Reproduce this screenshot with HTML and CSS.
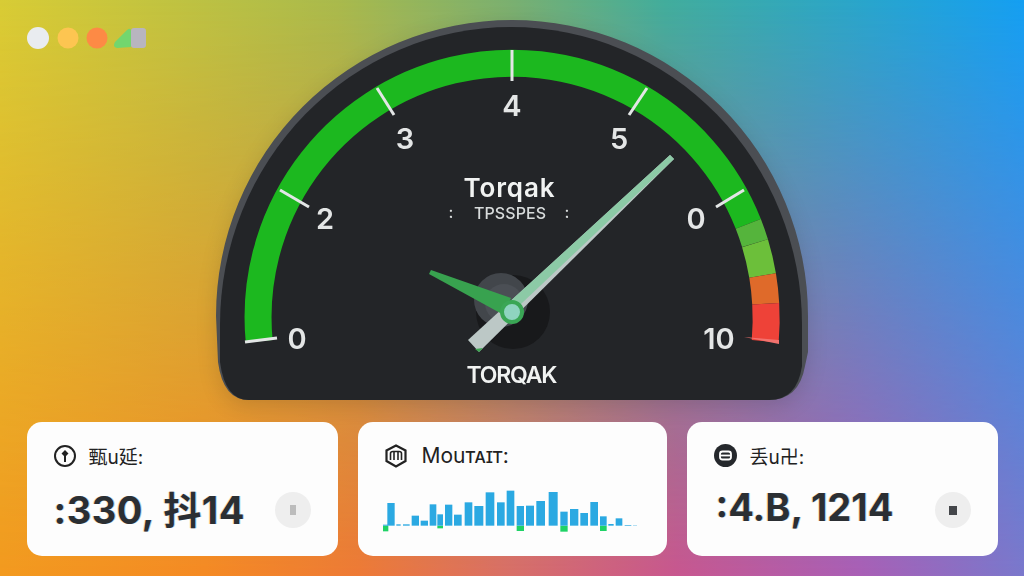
FILE: index.html
```html
<!DOCTYPE html>
<html lang="en">
<head>
    <meta charset="UTF-8">
    <meta name="viewport" content="width=device-width, initial-scale=1.0">
    <title>Torqak</title>
    <link rel="stylesheet" href="styles.css">
</head>
<body>
    <div class="screen">
        <!-- Window controls -->
        <svg class="controls" width="126" height="24" viewBox="26 26 126 24">
            <circle cx="38" cy="38" r="11" fill="#e9ecf0"/>
            <circle cx="68" cy="38" r="10.5" fill="#fdc551"/>
            <circle cx="97" cy="38" r="10.5" fill="#fd8a45"/>
            <path d="M115 42 L127 30 Q131 27 131 31 L131 47 L117 48 Q112 47 115 42 Z" fill="#72d66e"/>
            <rect x="131" y="28" width="15" height="20" rx="3" fill="#b8b5bf"/>
        </svg>

        <!-- Gauge -->
        <svg class="gauge" width="600" height="392" viewBox="213 14 600 392">
            <path class="rim" d="M217 316 A296 296 0 0 1 809 316 L809 352 L806 366 Q800 400 770 400 L250 400 Q224 400 219 362 Z"/>
            <path class="face" d="M221 325 A291 298 0 0 1 803 325 L803 366 Q798 400 770 400 L250 400 Q226 400 221 362 Z"/>

            <path class="band" stroke="#1cb81f" d="M260.2 341.3 A254 254 0 0 1 749.3 223.9"/>
            <path class="band" stroke="#55b43c" d="M749.3 223.9 A254 254 0 0 1 756 243.2"/>
            <path class="band" stroke="#6cbf3a" d="M756 243.2 A254 254 0 0 1 763.6 275.5"/>
            <path class="band" stroke="#df6a2a" d="M763.6 275.5 A254 254 0 0 1 766.7 303.7"/>
            <path class="band" stroke="#ee4238" d="M766.7 303.7 A254 254 0 0 1 766.2 341.3"/>
            <path d="M745 337 L780 340 L780 344 Z" fill="#f2726e"/>

            <g class="ticks">
                <line x1="246" y1="342" x2="278" y2="338"/>
                <line x1="281" y1="190" x2="310" y2="207"/>
                <line x1="378" y1="88" x2="395" y2="115"/>
                <line x1="513" y1="50" x2="513" y2="81"/>
                <line x1="648" y1="88" x2="630" y2="115"/>
                <line x1="745" y1="190" x2="717" y2="207"/>
            </g>

            <g class="num">
                <text x="298" y="349">0</text>
                <text x="326" y="229">2</text>
                <text x="406" y="149">3</text>
                <text x="513" y="116">4</text>
                <text x="620" y="149">5</text>
                <text x="697" y="229">0</text>
                <text x="720" y="349">10</text>
            </g>

            <text class="title title-top" x="510" y="197" textLength="91">Torqak</text>
            <text class="sub" x="511" y="219" textLength="72">TPSSPES</text>
            <text class="sub" x="452" y="218">:</text>
            <text class="sub" x="568" y="218">:</text>
            <text class="title" x="513" y="383" textLength="91">TORQAK</text>

            <!-- hub -->
            <circle cx="514" cy="312" r="37" fill="#18191b"/>
            <circle cx="502" cy="300" r="27" fill="#42464b"/>
            <circle cx="505" cy="303" r="19" fill="#4b4f55"/>

            <!-- needles -->
            <path d="M469 340 L671 155 L675 159 L480 352 Z" fill="#bcc8c6"/>
            <path d="M506 306 L671 155 L675 159 L522 304 Z" fill="#8ccaa6"/>
            <path d="M476 349 L480 352 L484 348 Z" fill="#3fa653"/>
            <path d="M430 274 L432 270 L512 298 L503 314 Z" fill="#38a24f"/>
            <circle cx="513" cy="312" r="10" fill="#8fd4c0" stroke="#3aa655" stroke-width="4"/>
        </svg>

        <!-- Stat cards -->
        <div class="cards">
            <div class="card">
                <div class="card-head">
                    <svg class="icon" width="22" height="22" viewBox="0 0 22 22">
                        <circle cx="11" cy="11" r="10" fill="none" stroke="#222" stroke-width="2"/>
                        <path d="M11 5 L14.5 8.5 L12 11 L12 17 L10 17 L10 11 L7.5 8.5 Z" fill="#222"/>
                    </svg>
                    <span class="label">甄u延:</span>
                </div>
                <div class="card-body">
                    <span class="value">:330, 抖14</span>
                    <span class="round"><i class="dot-light"></i></span>
                </div>
            </div>

            <div class="card">
                <div class="card-head">
                    <svg class="icon" width="22" height="24" viewBox="0 0 22 24">
                        <path d="M11 1.5 L20.5 6.5 L20.5 17 L11 22.5 L1.5 17 L1.5 6.5 Z" fill="none" stroke="#222" stroke-width="2.2"/>
                        <path d="M5.5 16 L5.5 9.5 Q5.5 7.5 8 7.5 L14 7.5 Q16.5 7.5 16.5 9.5 L16.5 16 M9 16 L9 8 M13 16 L13 8" fill="none" stroke="#222" stroke-width="1.6"/>
                    </svg>
                    <span class="label label-caps">Moutait:</span>
                </div>
                <svg class="chart" width="255" height="44" viewBox="100 222 765 132">
                    <g fill="#1fd266">
                        <rect x="100" y="332" width="16" height="17"/>
                        <rect x="263" y="332" width="17" height="8"/>
                        <rect x="501" y="332" width="22" height="16"/>
                        <rect x="632" y="332" width="22" height="18"/>
                        <rect x="751" y="332" width="20" height="16"/>
                    </g>
                    <g fill="#2ba9e2">
                        <rect x="100" y="329" width="15" height="3"/>
                        <rect x="113" y="264" width="22" height="68"/>
                        <rect x="140" y="328" width="13" height="4"/>
                        <rect x="160" y="328" width="20" height="4"/>
                        <rect x="186" y="302" width="22" height="30"/>
                        <rect x="213" y="317" width="22" height="15"/>
                        <rect x="240" y="268" width="20" height="64"/>
                        <rect x="263" y="298" width="17" height="34"/>
                        <rect x="286" y="269" width="22" height="63"/>
                        <rect x="313" y="299" width="23" height="33"/>
                        <rect x="345" y="262" width="23" height="70"/>
                        <rect x="374" y="273" width="27" height="59"/>
                        <rect x="408" y="232" width="26" height="100"/>
                        <rect x="442" y="262" width="23" height="70"/>
                        <rect x="471" y="227" width="23" height="105"/>
                        <rect x="501" y="273" width="22" height="59"/>
                        <rect x="529" y="272" width="24" height="60"/>
                        <rect x="560" y="258" width="26" height="74"/>
                        <rect x="597" y="231" width="27" height="101"/>
                        <rect x="632" y="290" width="22" height="42"/>
                        <rect x="661" y="282" width="25" height="50"/>
                        <rect x="692" y="294" width="23" height="38"/>
                        <rect x="722" y="261" width="23" height="71"/>
                        <rect x="751" y="304" width="20" height="28"/>
                        <rect x="776" y="327" width="16" height="5"/>
                        <rect x="798" y="310" width="20" height="22"/>
                        <rect x="825" y="330" width="20" height="2"/>
                        <rect x="850" y="331" width="12" height="1"/>
                    </g>
                </svg>
            </div>

            <div class="card">
                <div class="card-head">
                    <svg class="icon" width="23" height="23" viewBox="0 0 23 23">
                        <circle cx="11.5" cy="11.5" r="11.5" fill="#25282c"/>
                        <rect x="6" y="7.5" width="11" height="8" rx="2.5" fill="none" stroke="#fff" stroke-width="1.8"/>
                        <line x1="6" y1="11.5" x2="17" y2="11.5" stroke="#fff" stroke-width="1.8"/>
                    </svg>
                    <span class="label">丢u卍:</span>
                </div>
                <div class="card-body">
                    <span class="value value-alt">:4.B, 1214</span>
                    <span class="round"><i class="dot-dark"></i></span>
                </div>
            </div>
        </div>
    </div>
</body>
</html>
```

FILE: styles.css
```css
body {
    margin: 0;
    padding: 0;
    overflow: hidden;
    font-family: Inter, "Noto Sans CJK SC", sans-serif;
}

.screen {
    position: relative;
    width: 1024px;
    height: 576px;
    overflow: hidden;
    display: flex;
    flex-direction: column;
    align-items: center;
    padding-top: 14px;
    box-sizing: border-box;
    background: linear-gradient(90deg, #f39a1f 0%, #f58a24 20%, #ee7a36 35%, #d96f68 50%, #c9578f 66%, #aa5fb6 84%, #7b78cc 100%);
}
.screen::before {
    content: "";
    position: absolute;
    inset: 0;
    background: linear-gradient(90deg, #d8cc35 0%, #a9ba4c 33%, #79b070 50%, #41ad9c 65%, #149ff2 100%);
    -webkit-mask-image: linear-gradient(180deg, #000 0%, transparent 100%);
    mask-image: linear-gradient(180deg, #000 0%, transparent 100%);
}

.controls {
    position: absolute;
    left: 26px;
    top: 26px;
}

/* Gauge */
.gauge {
    position: relative;
    display: block;
    flex: none;
    filter: drop-shadow(0 6px 10px rgba(0, 0, 0, 0.12));
}
.rim {
    fill: #4b4e53;
}
.face {
    fill: #232528;
}
.band {
    fill: none;
    stroke-width: 27;
}
.ticks line {
    stroke: #e3e6e6;
    stroke-width: 3;
}
.num text {
    font-size: 29px;
    font-weight: 600;
    fill: #e4e6e6;
    text-anchor: middle;
}
.title {
    font-size: 23px;
    font-weight: 600;
    fill: #f1f3f2;
    text-anchor: middle;
}
.title-top {
    font-size: 26px;
}
.sub {
    font-size: 16px;
    font-weight: 500;
    fill: #d8dcdc;
    text-anchor: middle;
}

/* Cards */
.cards {
    position: relative;
    display: grid;
    grid-template-columns: 311px 309px 311px;
    gap: 20px;
    margin-top: 16px;
}
.card {
    height: 134px;
    box-sizing: border-box;
    padding: 22px 27px 0 27px;
    background: #fdfdfd;
    border-radius: 15px;
}
.card-head {
    display: flex;
    align-items: center;
    gap: 13px;
    height: 23px;
    color: #222;
}
.icon {
    flex: none;
}
.label {
    font-size: 19px;
}
.label-caps {
    font-variant: small-caps;
    font-size: 21px;
    margin-left: 2px;
}
.card-body {
    display: flex;
    align-items: center;
    justify-content: space-between;
    margin-top: 25px;
    height: 36px;
}
.value {
    font-size: 38px;
    font-weight: 700;
    color: #2b2f33;
    letter-spacing: 0.5px;
    padding-bottom: 6px;
    text-shadow: -1px 0 0 rgba(240, 160, 60, 0.35), 1px 0 0 rgba(40, 130, 190, 0.35);
}
.value-alt {
    letter-spacing: 0;
    margin-left: 2px;
}
.round {
    width: 36px;
    height: 36px;
    border-radius: 50%;
    background: #eeeeee;
    display: flex;
    align-items: center;
    justify-content: center;
}
.dot-light {
    display: block;
    width: 6px;
    height: 10px;
    background: #bcbcbc;
}
.dot-dark {
    display: block;
    width: 8px;
    height: 9px;
    background: #44464a;
}
.chart {
    display: block;
    margin-top: 22px;
    margin-left: -2px;
}
```
